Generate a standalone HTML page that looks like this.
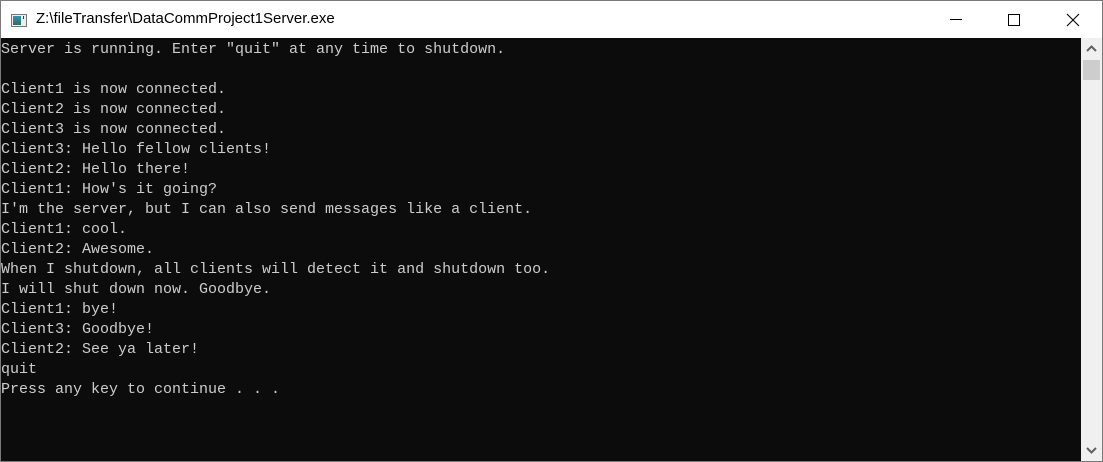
<!DOCTYPE html>
<html><head><meta charset="utf-8"><style>
html,body{margin:0;padding:0;width:1103px;height:462px;overflow:hidden;background:#fff}
.win{position:absolute;left:0;top:0;width:1101px;height:460px;border:1px solid #7a7a7a;background:#fff}
.title{position:absolute;left:0;top:0;width:1101px;height:37px;background:#fff}
.ttext{position:absolute;left:35px;top:9px;font:15px "Liberation Sans",sans-serif;color:#000}
.icon{position:absolute;left:10px;top:13px;width:14px;height:11px;border:1px solid #777;background:#eee}
.icon i{position:absolute;left:1px;top:1px;width:8px;height:9px;background:linear-gradient(#3a8fb0,#2c6e60)}
.icon b{position:absolute;left:11px;top:1px;width:1px;height:3px;background:#336}
.con{position:absolute;left:0;top:37px;width:1080px;height:423px;background:#0c0c0c}
pre{position:absolute;left:0;top:2px;margin:0;font:15px/20px "Liberation Mono",monospace;color:#cccccc}
.sb{position:absolute;left:1080px;top:37px;width:21px;height:423px;background:#f0f0f0}
.thumb{position:absolute;left:2px;top:22px;width:17px;height:20px;background:#cdcdcd}
</style></head><body>
<div class="win">
<div class="title">
<div class="icon"><i></i><b></b></div>
<div class="ttext">Z:\fileTransfer\DataCommProject1Server.exe</div>
<svg style="position:absolute;left:940px;top:0" width="161" height="37">
<line x1="9" y1="18.5" x2="21" y2="18.5" stroke="#000" stroke-width="1"/>
<rect x="67.5" y="13.5" width="11" height="11" fill="none" stroke="#000"/>
<path d="M126 13 L138 25 M138 13 L126 25" stroke="#000" stroke-width="1.1"/>
</svg>
</div>
<div class="con"><pre>Server is running. Enter "quit" at any time to shutdown.

Client1 is now connected.
Client2 is now connected.
Client3 is now connected.
Client3: Hello fellow clients!
Client2: Hello there!
Client1: How's it going?
I'm the server, but I can also send messages like a client.
Client1: cool.
Client2: Awesome.
When I shutdown, all clients will detect it and shutdown too.
I will shut down now. Goodbye.
Client1: bye!
Client3: Goodbye!
Client2: See ya later!
quit
Press any key to continue . . .</pre></div>
<div class="sb"><div class="thumb"></div>
<svg style="position:absolute;left:0;top:0" width="21" height="423">
<path d="M6 13 L10.5 8.5 L15 13" fill="none" stroke="#606060" stroke-width="2"/>
<path d="M6 410 L10.5 414.5 L15 410" fill="none" stroke="#606060" stroke-width="2"/>
</svg></div>
</div>
</body></html>
